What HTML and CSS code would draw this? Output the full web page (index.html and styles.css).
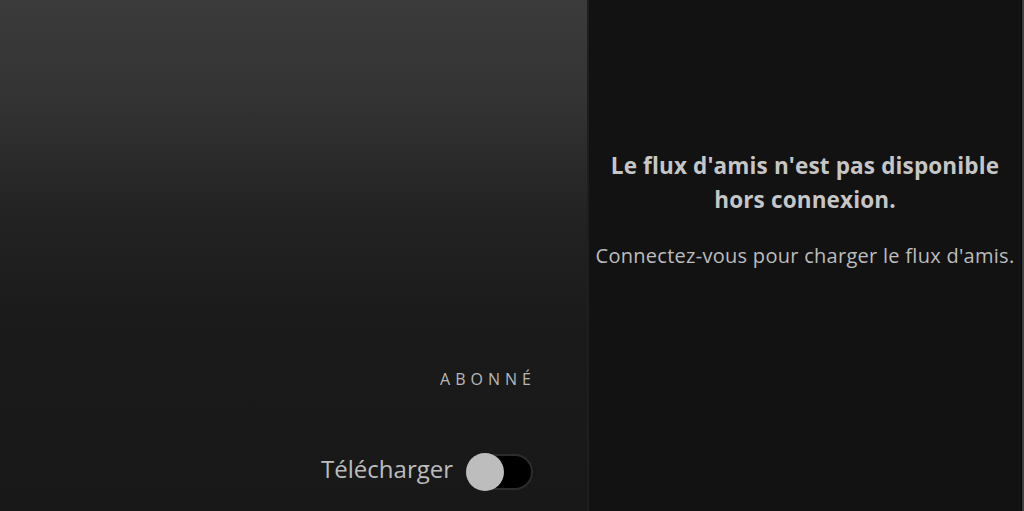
FILE: index.html
```html
<!DOCTYPE html>
<html lang="fr">
<head>
<meta charset="utf-8">
<title>Spotify</title>
<link rel="stylesheet" href="styles.css">
</head>
<body>
<div class="app">
  <section class="main">
    <div class="controls">
      <div class="subscribed">ABONNÉ</div>
      <div class="download">
        <span class="download-label">Télécharger</span>
        <span class="toggle"><span class="knob"></span></span>
      </div>
    </div>
  </section>
  <aside class="friends">
    <div class="friends-msg">
      <h2 class="friends-title">Le flux d'amis n'est pas disponible<br>hors connexion.</h2>
      <p class="friends-sub">Connectez-vous pour charger le flux d'amis.</p>
    </div>
    <div class="scrollbar"></div>
  </aside>
</div>
</body>
</html>
```
FILE: styles.css
```css
html, body {
  margin: 0;
  padding: 0;
  width: 1024px;
  height: 511px;
  overflow: hidden;
  background: #121212;
  font-family: "Open Sans", "Noto Sans", sans-serif;
}
.app {
  display: flex;
  width: 1024px;
  height: 511px;
}
.main {
  width: 589px;
  flex: none;
  border-right: 2px solid #1e1e1e;
  background: linear-gradient(180deg, #3b3b3b 0px, #333333 100px, #222222 220px, #1a1a1a 330px, #181818 511px);
  display: flex;
  flex-direction: column;
  justify-content: flex-end;
  align-items: flex-end;
  padding: 0 54px 21px 0;
  box-sizing: border-box;
}
.controls {
  display: flex;
  flex-direction: column;
  align-items: flex-end;
}
.subscribed {
  color: #b8b8b8;
  font-size: 16px;
  letter-spacing: 5px;
  margin-right: -3px;
  line-height: 20px;
  margin-bottom: 65px;
}
.download {
  display: flex;
  align-items: center;
  gap: 13px;
}
.download-label {
  color: #bdbdbd;
  font-size: 24px;
  line-height: 38px;
  margin-top: -6px;
}
.toggle {
  position: relative;
  width: 67px;
  height: 36px;
  box-sizing: border-box;
  border: 2px solid #2c2c2c;
  border-radius: 18px;
  background: #000;
  display: block;
}
.knob {
  position: absolute;
  left: -2px;
  top: -3px;
  width: 38px;
  height: 38px;
  border-radius: 50%;
  background: #bdbdbd;
}
.friends {
  flex: 1;
  display: flex;
  background: #121212;
}
.friends-msg {
  flex: 1;
  text-align: center;
  padding-top: 149px;
}
.friends-title {
  margin: 0;
  color: #c6c6c6;
  font-size: 22.5px;
  letter-spacing: 0.15px;
  font-weight: 700;
  line-height: 34px;
}
.friends-sub {
  margin: 27px 0 0;
  color: #bdbdbd;
  font-size: 20px;
  letter-spacing: 0.28px;
  line-height: 24px;
}
.scrollbar {
  width: 2px;
  border-left: 1px solid #050505;
  background: #404040;
}
```
